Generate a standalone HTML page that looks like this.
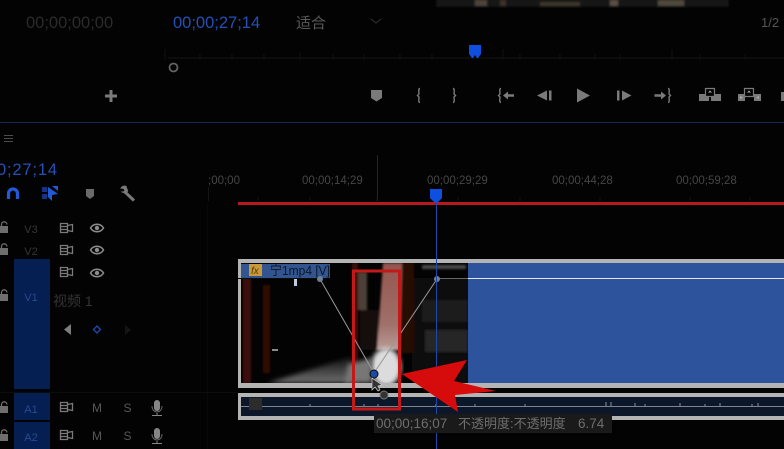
<!DOCTYPE html>
<html><head><meta charset="utf-8"><style>
html,body{margin:0;padding:0;background:#030303;width:784px;height:449px;overflow:hidden}
svg{display:block}
text{font-family:"Liberation Sans","Noto Sans CJK SC",sans-serif}
</style></head><body>
<svg width="784" height="449" viewBox="0 0 784 449" xmlns="http://www.w3.org/2000/svg">
<defs>
<linearGradient id="floor" x1="0" y1="0" x2="0" y2="1"><stop offset="0" stop-color="#0a0a0a"/><stop offset="1" stop-color="#707070"/></linearGradient>
<linearGradient id="pillar" x1="0" y1="0" x2="0" y2="1"><stop offset="0" stop-color="#93564e"/><stop offset="0.7" stop-color="#a0706a"/><stop offset="1" stop-color="#b89c96"/></linearGradient>
<filter id="b1"><feGaussianBlur stdDeviation="1"/></filter>
<filter id="b2"><feGaussianBlur stdDeviation="2.500"/></filter>
</defs>
<rect width="784" height="449" fill="#030303"/>

<!-- preview image strip -->
<g filter="url(#b1)">
<rect x="436" y="-2" width="293" height="9" fill="#191613"/>
<rect x="475" y="0" width="12" height="6" fill="#4d443c"/>
<rect x="500" y="0" width="6" height="6" fill="#3a332c"/>
<rect x="540" y="2" width="40" height="4" fill="#3c342c"/>
<rect x="610" y="0" width="8" height="6" fill="#5a5044"/>
<rect x="658" y="0" width="26" height="6" fill="#50483e"/>
</g>

<!-- timecodes -->
<text x="26" y="28" font-size="16.500" fill="#2b2b2b">00;00;00;00</text>
<text x="173" y="28" font-size="16.500" fill="#2450b8">00;00;27;14</text>
<text x="296" y="28" font-size="15" fill="#5a5a5a">适合</text>
<path d="M371 19l5 4 5-4" fill="none" stroke="#333"/>
<text x="761" y="27" font-size="13" fill="#555">1/2</text>

<!-- program ruler -->
<rect x="168" y="57" width="616" height="2" fill="#0c0c0c"/>
<path d="M165 49V60M200 54V60M232 54V60M264 54V60M300 52V60M333 54V60M364 54V60M400 54V60M432 54V60M503 49V60M520 54V60M560 54V60M595 54V60M620 54V60M672 49V60M700 54V60M745 54V60" stroke="#111"/>
<circle cx="173.500" cy="67.500" r="4" fill="none" stroke="#626262" stroke-width="1.800"/>
<path d="M469 45h12v9l-3 4h-1l-2-3-2 3h-1l-3-4z" fill="#0f4fe0"/>

<!-- transport -->
<g fill="#7a7a7a">
<path d="M105 94.500h4.500V90h3v4.500h4.500v3h-4.500V102h-3v-4.500H105z"/>
<path d="M371 90h11v8l-5.500 3.500-5.500-3.500z"/>
<path d="M537 95.500l10-5v10zM549 90.500h2.500v10H549z"/>
<path d="M577 88.500l13 7-13 7z"/>
<path d="M617 90.500h2.500v10H617zM622 90.500l9.500 5-9.500 5z"/>
<path d="M503 95.500l5-4v2.800h6v2.400h-6v2.800z"/>
<path d="M666 95.500l-5-4v2.800h-6.500v2.400h6.500v2.800z"/>
<rect x="699" y="94" width="10" height="7"/><rect x="711" y="94" width="10" height="7"/>
<rect x="738" y="94" width="7" height="7"/><rect x="754" y="94" width="7" height="7"/>
<rect x="781" y="92" width="3" height="9"/>
</g>
<path d="M705.500 88.500h9v8h-9zM744.500 88.500h9v8h-9z" fill="#030303" stroke="#7a7a7a" stroke-width="1.200"/>
<path d="M708 92.500l2-2 2 2zM747 92.500l2-2 2 2zM740 96l3 1.500-3 1.500zM759 96l-3 1.500 3 1.500z" fill="#aaa"/>
<g fill="none" stroke="#7a7a7a" stroke-width="1.400">
<path d="M420 88.500c-2 0-1 4-1 5.500l-1.500 1.500 1.500 1.500c0 1.500-1 5.500 1 5.500"/>
<path d="M453 88.500c2 0 1 4 1 5.500l1.500 1.500-1.500 1.500c0 1.500 1 5.500-1 5.500"/>
<path d="M501 88.500c-2 0-1 4-1 5.500l-1.500 1.500 1.500 1.500c0 1.500-1 5.500 1 5.500"/>
<path d="M668 88.500c2 0 1 4 1 5.500l1.500 1.500-1.500 1.500c0 1.500 1 5.500-1 5.500"/>
</g>

<!-- divider -->
<rect x="0" y="122" width="784" height="1" fill="#16295f"/>

<!-- timeline header -->
<path d="M4 135.500h9M4 138.500h9M4 141.500h9" stroke="#4c4c4c"/>
<text x="-3" y="175" font-size="16.500" fill="#2450b8" textLength="60">0;27;14</text>
<path d="M8.500 199v-5.500a4.500 4.500 0 0 1 9 0V199" fill="none" stroke="#2159d9" stroke-width="3.200"/>
<path d="M42 187h5v5h-5zM42 194h5v5h-5z" fill="#1d4cb8" opacity=".7"/>
<path d="M48 187l10 7-6 1v6l-4-4z" fill="#2159d9"/>
<path d="M52 186h6v5z" fill="#2159d9"/>
<path d="M86 189h8v7l-4 3-4-3z" fill="#6a6a6a"/>
<path d="M125 192l9 8.500" fill="none" stroke="#7a7a7a" stroke-width="3"/>
<path d="M126.500 186.500a4.500 4.500 0 0 0-5.500 1.500l0 0 3 .5 1 3-3 .5a4.500 4.500 0 0 0 6-1.500" fill="#7a7a7a" stroke="#7a7a7a"/>

<!-- ruler -->
<g font-size="11.500" fill="#464646">
<text x="208" y="184">;00;00</text>
<text x="302" y="184">00;00;14;29</text>
<text x="427" y="184">00;00;29;29</text>
<text x="552" y="184">00;00;44;28</text>
<text x="676" y="184">00;00;59;28</text>
</g>
<rect x="377" y="155" width="1" height="46" fill="#262626"/>
<rect x="208" y="187" width="1" height="14" fill="#151515"/>
<path d="M258 197V201M310 197V201M377 197V201M458 197V201M520 197V201M600 197V201M690 197V201M750 197V201" stroke="#111"/>
<rect x="238" y="202" width="546" height="3" fill="#b81820"/>
<path d="M430 189h12v9l-4 4h-1v1h-2v-1h-1l-4-4z" fill="#0f4fe0"/>

<!-- track grid -->
<rect x="207" y="205" width="1" height="244" fill="#090909"/>
<rect x="0" y="392" width="238" height="1" fill="#0c0c0c"/>

<!-- track targets -->
<rect x="14" y="259" width="36" height="130" fill="#051f52"/>
<rect x="14" y="393" width="36" height="27" fill="#051f52"/>
<rect x="14" y="422" width="36" height="27" fill="#051f52"/>
<g font-size="11" text-anchor="middle">
<text x="31" y="233" fill="#363636">V3</text>
<text x="31" y="255" fill="#363636">V2</text>
<text x="31" y="301" fill="#2a4a90">V1</text>
<text x="31" y="413" fill="#2a4a90">A1</text>
<text x="31" y="441" fill="#2a4a90">A2</text>
</g>

<!-- locks -->
<g fill="#6e6e6e">
<path d="M0 226h8v7H0zM0 248h8v7H0zM0 294h8v7H0zM0 406h8v7H0zM0 434h8v7H0z"/>
</g>
<g fill="none" stroke="#6e6e6e" stroke-width="1.300">
<path d="M1.500 226v-1.500a2.700 2.700 0 0 1 5.400 0M1.500 248v-1.500a2.700 2.700 0 0 1 5.400 0M1.500 294v-1.500a2.700 2.700 0 0 1 5.400 0M1.500 406v-1.500a2.700 2.700 0 0 1 5.400 0M1.500 434v-1.500a2.700 2.700 0 0 1 5.400 0"/>
</g>

<!-- sync icons -->
<g fill="none" stroke="#7a7a7a" stroke-width="1.300">
<path d="M60.500 223.500h7v9h-7zM60.500 226.500h7M60.500 229.500h7M67.500 225.500l5-1v7l-5-1"/>
<path d="M60.500 245.500h7v9h-7zM60.500 248.500h7M60.500 251.500h7M67.500 247.500l5-1v7l-5-1"/>
<path d="M60.500 267.500h7v9h-7zM60.500 270.500h7M60.500 273.500h7M67.500 269.500l5-1v7l-5-1"/>
<path d="M60.500 402.500h7v9h-7zM60.500 405.500h7M60.500 408.500h7M67.500 404.500l5-1v7l-5-1"/>
<path d="M60.500 430.500h7v9h-7zM60.500 433.500h7M60.500 436.500h7M67.500 432.500l5-1v7l-5-1"/>
</g>
<!-- eyes -->
<g fill="none" stroke="#8c8c8c" stroke-width="1.500">
<path d="M90.500 228c3-5 10-5 13 0-3 5-10 5-13 0zM90.500 250c3-5 10-5 13 0-3 5-10 5-13 0zM90.500 273c3-5 10-5 13 0-3 5-10 5-13 0z"/>
</g>
<g fill="#8c8c8c"><circle cx="97" cy="228" r="2.200"/><circle cx="97" cy="250" r="2.200"/><circle cx="97" cy="273" r="2.200"/></g>

<text x="53" y="306" font-size="14" fill="#343434">视频 1</text>
<path d="M71 324v11l-7-5.500z" fill="#7c7c7c"/>
<path d="M97 326l3.500 3.500-3.500 3.500-3.500-3.500z" fill="none" stroke="#1d4cb0" stroke-width="1.300"/>
<path d="M125 325v10l6-5z" fill="#141414"/>

<g font-size="12" fill="#575757" text-anchor="middle">
<text x="97" y="412">M</text><text x="127.500" y="412">S</text>
<text x="97" y="440">M</text><text x="127.500" y="440">S</text>
</g>
<g fill="#858585">
<rect x="154" y="400" width="6" height="11" rx="3"/><rect x="154" y="428" width="6" height="11" rx="3"/>
<rect x="156.500" y="413" width="1" height="2"/><rect x="156.500" y="441" width="1" height="2"/>
<rect x="152" y="415" width="10" height="1"/><rect x="152" y="443" width="10" height="1"/>
</g>
<path d="M152 406c0 8 10 8 10 0M152 434c0 8 10 8 10 0" fill="none" stroke="#666"/>

<!-- video clip -->
<rect x="238" y="259" width="546" height="129" fill="#b4b4b4"/>
<rect x="241" y="263" width="227" height="120" fill="#040303"/>
<rect x="468" y="263" width="316" height="120" fill="#2c539b"/>

<!-- thumbnail -->
<svg x="241" y="263" width="227" height="120" viewBox="241 263 227 120">
<g filter="url(#b1)">
<rect x="243" y="278" width="8" height="105" fill="#3e0c08"/>
<rect x="263" y="285" width="7" height="88" fill="#2e0906"/>
<rect x="352" y="263" width="6" height="120" fill="#3e0f0b"/>
<rect x="358" y="272" width="9" height="38" fill="#4d4038"/>
<rect x="360" y="310" width="18" height="40" fill="#120e0c"/>
<path d="M383 263L402 263 400 350 377 350z" fill="url(#pillar)"/>
<rect x="402" y="263" width="12" height="90" fill="#260805"/>
<rect x="414" y="278" width="54" height="105" fill="#101010"/>
<rect x="422" y="300" width="46" height="22" fill="#1e1e1e"/>
<rect x="425" y="330" width="43" height="22" fill="#262626"/>
<path d="M412 352L468 360 468 383 412 383z" fill="#080808"/>
<rect x="422" y="265" width="44" height="4" fill="#4a4a4a"/>
</g>
<path d="M268 383L335 362 352 356 352 383z" fill="url(#floor)" filter="url(#b2)"/>
<rect x="272" y="349" width="6" height="2" fill="#8a8a8a"/>
<ellipse cx="386" cy="367" rx="15" ry="19" fill="#dcdcdc" filter="url(#b2)"/>
<path d="M345 383L348 364 372 358 372 383z" fill="#777" filter="url(#b2)"/>
<rect x="294" y="279" width="3" height="7" fill="#bcd"/>
</svg>

<!-- clip label -->
<rect x="241" y="264" width="89" height="14" fill="#33558f"/>
<rect x="249" y="264" width="13" height="12" fill="#c89a3a"/>
<text x="251" y="274" font-size="10" font-style="italic" font-family="Liberation Serif" fill="#5a3a00">fx</text>
<text x="270" y="275" font-size="13" fill="#0e1729" textLength="60" lengthAdjust="spacingAndGlyphs">宁1mp4 [V]</text>

<!-- rubber band -->
<rect x="238" y="278" width="82" height="1" fill="#0b0b0b"/>
<rect x="437" y="278" width="31" height="1" fill="#666"/>
<rect x="468" y="278" width="316" height="1" fill="#dfe6f2"/>
<path d="M320 279L374 373L437 279" fill="none" stroke="#9a9a9a" stroke-width="1"/>
<circle cx="320" cy="279" r="3" fill="#6f7f95"/>
<circle cx="437" cy="279" r="3" fill="#6f7f95"/>

<!-- audio clip -->
<rect x="238" y="393" width="546" height="27" fill="#b4b4b4"/>
<rect x="241" y="397" width="543" height="19" fill="#0c1729"/>
<rect x="241" y="406" width="543" height="1" fill="#7d8490"/>
<rect x="249" y="398" width="13" height="12" fill="#2c2c2c"/>
<path d="M310 404V406M364 404V406M378 404V406M436 404V406M475 404V406M525 404V406M606 402V406M611 402V406M635 403V406M645 404V406M680 403V406M705 404V406M720 403V406M752 404V406M758 403V406" stroke="#8890a0" stroke-width="1"/>

<!-- playhead -->
<rect x="436" y="203" width="1" height="246" fill="#1f48a8"/>

<!-- red highlight -->
<rect x="353.500" y="271" width="46" height="138" fill="none" stroke="#c31a19" stroke-width="3"/>

<!-- keyframe and cursor -->
<circle cx="374" cy="374" r="4" fill="#1d4aa5" stroke="#0a0a0a"/>
<path d="M372 378l0 12 3-3 3 4 2-1-2-4 4-1z" fill="#333" stroke="#ccc" stroke-width=".7"/>
<circle cx="384" cy="395" r="4" fill="#333" stroke="#777"/>

<!-- red arrow -->
<path d="M402 374L467 360 454 381 496 391 455 395 458 412z" fill="#d60b0b"/>

<!-- tooltip -->
<rect x="374" y="414" width="238" height="19" fill="#1a1a1a"/>
<text x="376" y="428" font-size="13.500" fill="#6e6e6e">00;00;16;07</text>
<text x="458" y="428" font-size="13" fill="#6e6e6e">不透明度:不透明度</text>
<text x="578" y="428" font-size="13.500" fill="#6e6e6e">6.74</text>
</svg>
</body></html>
